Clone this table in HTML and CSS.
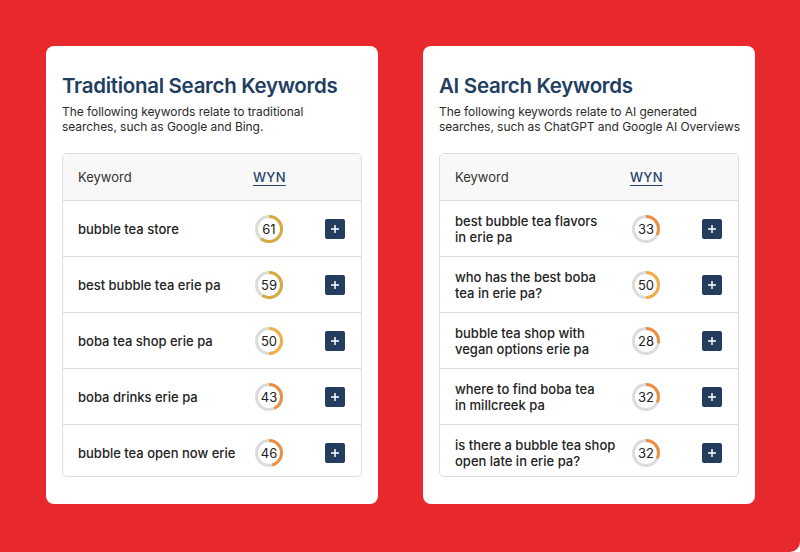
FILE: index.html
```html
<!DOCTYPE html>
<html>
<head>
<meta charset="utf-8">
<link rel="stylesheet" href="styles.css">
</head>
<body>
<div class="page">
  <section class="card">
    <h1 class="title">Traditional Search Keywords</h1>
    <p class="desc">The following keywords relate to traditional<br>searches, such as Google and Bing.</p>
    <div class="table">
      <div class="row head">
        <div class="kw">Keyword</div>
        <div class="wyn-h"><span>WYN</span></div>
        <div></div>
      </div>
      <div class="row">
        <div class="kw">bubble tea store</div>
        <div class="score"><svg class="ring" viewBox="0 0 28 28"><circle class="track" cx="14" cy="14" r="12.5"/><circle class="arc gold" cx="14" cy="14" r="12.5" pathLength="100" stroke-dasharray="61 100"/></svg><span>61</span></div>
        <div class="act"><button class="add"><svg viewBox="0 0 20 20"><path d="M10 6v8M6 10h8"/></svg></button></div>
      </div>
      <div class="row">
        <div class="kw">best bubble tea erie pa</div>
        <div class="score"><svg class="ring" viewBox="0 0 28 28"><circle class="track" cx="14" cy="14" r="12.5"/><circle class="arc gold" cx="14" cy="14" r="12.5" pathLength="100" stroke-dasharray="59 100"/></svg><span>59</span></div>
        <div class="act"><button class="add"><svg viewBox="0 0 20 20"><path d="M10 6v8M6 10h8"/></svg></button></div>
      </div>
      <div class="row">
        <div class="kw">boba tea shop erie pa</div>
        <div class="score"><svg class="ring" viewBox="0 0 28 28"><circle class="track" cx="14" cy="14" r="12.5"/><circle class="arc amber" cx="14" cy="14" r="12.5" pathLength="100" stroke-dasharray="50 100"/></svg><span>50</span></div>
        <div class="act"><button class="add"><svg viewBox="0 0 20 20"><path d="M10 6v8M6 10h8"/></svg></button></div>
      </div>
      <div class="row">
        <div class="kw">boba drinks erie pa</div>
        <div class="score"><svg class="ring" viewBox="0 0 28 28"><circle class="track" cx="14" cy="14" r="12.5"/><circle class="arc orange" cx="14" cy="14" r="12.5" pathLength="100" stroke-dasharray="43 100"/></svg><span>43</span></div>
        <div class="act"><button class="add"><svg viewBox="0 0 20 20"><path d="M10 6v8M6 10h8"/></svg></button></div>
      </div>
      <div class="row">
        <div class="kw">bubble tea open now erie</div>
        <div class="score"><svg class="ring" viewBox="0 0 28 28"><circle class="track" cx="14" cy="14" r="12.5"/><circle class="arc orange" cx="14" cy="14" r="12.5" pathLength="100" stroke-dasharray="46 100"/></svg><span>46</span></div>
        <div class="act"><button class="add"><svg viewBox="0 0 20 20"><path d="M10 6v8M6 10h8"/></svg></button></div>
      </div>
    </div>
  </section>
  <section class="card">
    <h1 class="title">AI Search Keywords</h1>
    <p class="desc">The following keywords relate to AI generated<br>searches, such as ChatGPT and Google AI Overviews</p>
    <div class="table">
      <div class="row head">
        <div class="kw">Keyword</div>
        <div class="wyn-h"><span>WYN</span></div>
        <div></div>
      </div>
      <div class="row">
        <div class="kw">best bubble tea flavors<br>in erie pa</div>
        <div class="score"><svg class="ring" viewBox="0 0 28 28"><circle class="track" cx="14" cy="14" r="12.5"/><circle class="arc orange" cx="14" cy="14" r="12.5" pathLength="100" stroke-dasharray="33 100"/></svg><span>33</span></div>
        <div class="act"><button class="add"><svg viewBox="0 0 20 20"><path d="M10 6v8M6 10h8"/></svg></button></div>
      </div>
      <div class="row">
        <div class="kw">who has the best boba<br>tea in erie pa?</div>
        <div class="score"><svg class="ring" viewBox="0 0 28 28"><circle class="track" cx="14" cy="14" r="12.5"/><circle class="arc amber" cx="14" cy="14" r="12.5" pathLength="100" stroke-dasharray="50 100"/></svg><span>50</span></div>
        <div class="act"><button class="add"><svg viewBox="0 0 20 20"><path d="M10 6v8M6 10h8"/></svg></button></div>
      </div>
      <div class="row">
        <div class="kw">bubble tea shop with<br>vegan options erie pa</div>
        <div class="score"><svg class="ring" viewBox="0 0 28 28"><circle class="track" cx="14" cy="14" r="12.5"/><circle class="arc orange" cx="14" cy="14" r="12.5" pathLength="100" stroke-dasharray="28 100"/></svg><span>28</span></div>
        <div class="act"><button class="add"><svg viewBox="0 0 20 20"><path d="M10 6v8M6 10h8"/></svg></button></div>
      </div>
      <div class="row">
        <div class="kw">where to find boba tea<br>in millcreek pa</div>
        <div class="score"><svg class="ring" viewBox="0 0 28 28"><circle class="track" cx="14" cy="14" r="12.5"/><circle class="arc orange" cx="14" cy="14" r="12.5" pathLength="100" stroke-dasharray="32 100"/></svg><span>32</span></div>
        <div class="act"><button class="add"><svg viewBox="0 0 20 20"><path d="M10 6v8M6 10h8"/></svg></button></div>
      </div>
      <div class="row">
        <div class="kw">is there a bubble tea shop<br>open late in erie pa?</div>
        <div class="score"><svg class="ring" viewBox="0 0 28 28"><circle class="track" cx="14" cy="14" r="12.5"/><circle class="arc orange" cx="14" cy="14" r="12.5" pathLength="100" stroke-dasharray="32 100"/></svg><span>32</span></div>
        <div class="act"><button class="add"><svg viewBox="0 0 20 20"><path d="M10 6v8M6 10h8"/></svg></button></div>
      </div>
    </div>
  </section>
</div>
</body>
</html>
```

FILE: styles.css
```css
* { box-sizing: border-box; }
html, body { margin: 0; padding: 0; background: #ffffff; }
body { font-family: Inter, "Noto Sans", sans-serif; }

.page {
  width: 800px;
  height: 552px;
  background: #e7292d;
  border-radius: 0 0 10px 0;
  padding: 46px 45px 48px 46px;
  display: flex;
  gap: 45px;
  align-items: flex-start;
}

.card {
  flex: 0 0 332px;
  width: 332px;
  height: 458px;
  background: #ffffff;
  border-radius: 8px;
  padding: 26px 16px 0 16px;
}

.title {
  margin: 0;
  font-size: 20.5px;
  line-height: 28px;
  font-weight: 600;
  color: #213d60;
  letter-spacing: -0.3px;
  white-space: nowrap;
}

.desc {
  margin: 5px 0 0 0;
  font-size: 12px;
  line-height: 14.5px;
  color: #2b2b2b;
  letter-spacing: -0.05px;
  white-space: nowrap;
}

.table {
  margin-top: 19px;
  height: 324px;
  border: 1px solid #dcdcdc;
  border-radius: 5px;
  overflow: hidden;
}

.row {
  display: grid;
  grid-template-columns: 177px 70px 1fr;
  align-items: center;
  height: 56px;
  border-bottom: 1px solid #dedede;
  font-size: 13px;
  color: #222;
}

.row.head {
  height: 47px;
  background: #f8f8f8;
  color: #333;
}

.row.head .kw { font-weight: 400; }

.kw {
  padding: 0 0 0 15px;
  font-weight: 500;
  line-height: 16px;
  white-space: nowrap;
}

.wyn-h { padding-left: 13px; }
.wyn-h span {
  color: #24446b;
  font-weight: 500;
  text-decoration: underline;
  text-underline-offset: 3px;
  text-decoration-thickness: 1px;
  letter-spacing: 0.3px;
}

.score {
  padding-left: 15px;
  position: relative;
  height: 28px;
  display: flex;
  align-items: center;
}
.ring {
  width: 28px;
  height: 28px;
  transform: rotate(-90deg);
}
.track { fill: none; stroke: #dcdcdc; stroke-width: 3; }
.arc { fill: none; stroke-width: 3; }
.gold { stroke: #d5aa3f; }
.amber { stroke: #f1ae45; }
.orange { stroke: #ec8f42; }
.score span {
  position: absolute;
  left: 15px;
  top: 0;
  width: 28px;
  height: 28px;
  line-height: 28px;
  text-align: center;
  font-size: 13px;
  color: #222;
}

.act { padding-left: 15px; display: flex; align-items: center; }
.add {
  width: 20px;
  height: 20px;
  padding: 0;
  border: none;
  border-radius: 2px;
  background: #243c5e;
  display: flex;
  align-items: center;
  justify-content: center;
}
.add svg { width: 20px; height: 20px; }
.add path { stroke: #ffffff; stroke-width: 1.5; fill: none; }
```
